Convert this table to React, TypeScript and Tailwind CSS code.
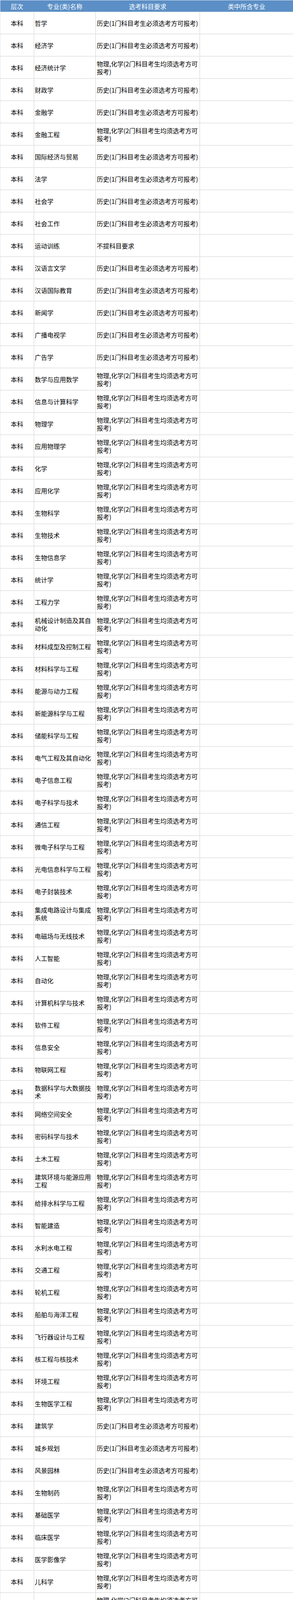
import React from "react";

const H = "历史(1门科目考生必须选考方可报考)";
const P = "物理,化学(2门科目考生均须选考方可报考)";
const N = "不提科目要求";

const rows: [string, string][] = [
  ["哲学", H],
  ["经济学", H],
  ["经济统计学", P],
  ["财政学", H],
  ["金融学", H],
  ["金融工程", P],
  ["国际经济与贸易", H],
  ["法学", H],
  ["社会学", H],
  ["社会工作", H],
  ["运动训练", N],
  ["汉语言文学", H],
  ["汉语国际教育", H],
  ["新闻学", H],
  ["广播电视学", H],
  ["广告学", H],
  ["数学与应用数学", P],
  ["信息与计算科学", P],
  ["物理学", P],
  ["应用物理学", P],
  ["化学", P],
  ["应用化学", P],
  ["生物科学", P],
  ["生物技术", P],
  ["生物信息学", P],
  ["统计学", P],
  ["工程力学", P],
  ["机械设计制造及其自动化", P],
  ["材料成型及控制工程", P],
  ["材料科学与工程", P],
  ["能源与动力工程", P],
  ["新能源科学与工程", P],
  ["储能科学与工程", P],
  ["电气工程及其自动化", P],
  ["电子信息工程", P],
  ["电子科学与技术", P],
  ["通信工程", P],
  ["微电子科学与工程", P],
  ["光电信息科学与工程", P],
  ["电子封装技术", P],
  ["集成电路设计与集成系统", P],
  ["电磁场与无线技术", P],
  ["人工智能", P],
  ["自动化", P],
  ["计算机科学与技术", P],
  ["软件工程", P],
  ["信息安全", P],
  ["物联网工程", P],
  ["数据科学与大数据技术", P],
  ["网络空间安全", P],
  ["密码科学与技术", P],
  ["土木工程", P],
  ["建筑环境与能源应用工程", P],
  ["给排水科学与工程", P],
  ["智能建造", P],
  ["水利水电工程", P],
  ["交通工程", P],
  ["轮机工程", P],
  ["船舶与海洋工程", P],
  ["飞行器设计与工程", P],
  ["核工程与核技术", P],
  ["环境工程", P],
  ["生物医学工程", P],
  ["建筑学", H],
  ["城乡规划", H],
  ["风景园林", H],
  ["生物制药", P],
  ["基础医学", P],
  ["临床医学", P],
  ["医学影像学", P],
  ["儿科学", P],
  ["口腔医学", P],
  ["预防医学", P],
  ["中西医临床医学", P],
  ["药学", P],
  ["法医学", P],
  ["医学检验技术", P],
  ["护理学", P],
  ["信息管理与信息系统", P],
  ["工程管理", P],
  ["工商管理", H],
  ["市场营销", H],
  ["会计学", H],
  ["财务管理", P],
  ["国际商务", H],
  ["物流管理", P],
  ["工业工程", P],
  ["音乐表演", N],
  ["播音与主持艺术", N],
  ["环境设计", N],
  ["产品设计", N],
  ["数字媒体艺术", N],
];

export default function App() {
  return (
    <div className="w-[751px] overflow-hidden bg-white font-['Noto_Sans_CJK_SC','Noto_Sans',sans-serif] text-[16px] leading-[20px] text-black">
      <div className="border-t border-l border-[#dce3ed] bg-[#e6e6e6]">
        <div className="flex h-[29px] items-center bg-[#5b8fc6] text-white">
          <div className="w-[85px] text-center">层次</div>
          <div className="ml-[2px] w-[156px] text-center">专业(类)名称</div>
          <div className="ml-[2px] w-[265px] text-center">选考科目要求</div>
          <div className="ml-[2px] flex-1 text-center">类中所含专业</div>
        </div>
        <div className="flex flex-col gap-[2px] pt-[1px] pb-[3px]">
          {rows.map(([name, req], i) => (
            <div key={i} className="flex h-[55px] gap-[2px]">
              <div className="flex w-[85px] items-center justify-center bg-white">本科</div>
              <div className="flex w-[156px] items-center bg-white pl-[1px] pr-[2px]">{name}</div>
              <div className="flex w-[265px] items-center bg-white pl-[2px] pr-[1px]">{req}</div>
              <div className="flex-1 bg-white"></div>
            </div>
          ))}
        </div>
      </div>
    </div>
  );
}
